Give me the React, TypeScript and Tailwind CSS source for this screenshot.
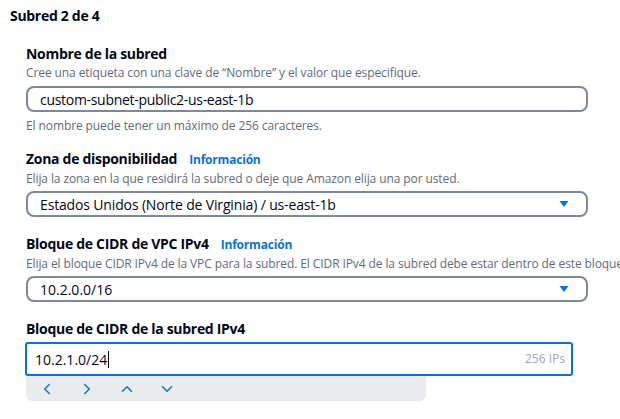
import { ChevronLeft, ChevronRight, ChevronUp, ChevronDown } from "lucide-react";

function Caret() {
  return (
    <svg className="w-3 h-3" viewBox="0 0 16 16">
      <path d="M2 4h12L8 12z" fill="#0972d3" />
    </svg>
  );
}

function Label({ text, info }: { text: string; info?: boolean }) {
  return (
    <div className="flex items-baseline gap-3 text-[14px] leading-[20px]">
      <span className="font-bold text-[#000716] tracking-[-0.3px]">{text}</span>
      {info && <span className="text-[12px] font-bold text-[#0972d3] tracking-[-0.2px]">Información</span>}
    </div>
  );
}

function Desc({ text }: { text: string }) {
  return <p className="text-[12px] leading-[18px] text-[#5f6b7a] whitespace-nowrap tracking-[-0.1px]">{text}</p>;
}

export default function App() {
  return (
    <div className="w-[620px] h-[419px] overflow-hidden bg-white text-[#000716] font-['Open_Sans',sans-serif]">
      <div className="pt-[7px] pl-[10px] text-[14px] font-bold leading-[18px] tracking-[-0.3px]">Subred 2 de 4</div>

      <div className="pl-[26px] pr-[32px] mt-[19px] flex flex-col">
        <Label text="Nombre de la subred" />
        <Desc text="Cree una etiqueta con una clave de “Nombre” y el valor que especifique." />
        <div className="mt-[4px] h-[26px] border-2 border-[#7d8998] rounded-lg flex items-center px-3 text-[14px] tracking-[-0.3px]">
          custom-subnet-public2-us-east-1b
        </div>
        <div className="mt-[5px]">
          <Desc text="El nombre puede tener un máximo de 256 caracteres." />
        </div>

        <div className="mt-[14px]">
          <Label text="Zona de disponibilidad" info />
        </div>
        <Desc text="Elija la zona en la que residirá la subred o deje que Amazon elija una por usted." />
        <div className="mt-[3px] h-[26px] border-2 border-[#7d8998] rounded-lg flex items-center justify-between pl-3 pr-4 text-[14px] tracking-[-0.15px]">
          <span>Estados Unidos (Norte de Virginia) / us-east-1b</span>
          <Caret />
        </div>

        <div className="mt-[17px]">
          <Label text="Bloque de CIDR de VPC IPv4" info />
        </div>
        <Desc text="Elija el bloque CIDR IPv4 de la VPC para la subred. El CIDR IPv4 de la subred debe estar dentro de este bloque." />
        <div className="mt-[3px] h-[26px] border-2 border-[#7d8998] rounded-lg flex items-center justify-between pl-3 pr-4 text-[14px]">
          <span>10.2.0.0/16</span>
          <Caret />
        </div>

        <div className="mt-[17px]">
          <Label text="Bloque de CIDR de la subred IPv4" />
        </div>
        <div className="-ml-px mr-[15px] mt-[3px] h-[34px] border-2 border-[#0972d3] rounded-[3px] flex items-center justify-between pl-[8px] pr-[6px] text-[14px]">
          <span className="flex items-center">
            10.2.1.0/24<span className="w-px h-[17px] bg-[#000716] ml-px" />
          </span>
          <span className="text-[12px] text-[#9ba7b6]">256 IPs</span>
        </div>
        <div className="w-[400px] h-[25px] bg-[#e9ebed] rounded-b-md flex items-center gap-[22px] pl-[12px] text-[#0972d3]">
          <ChevronLeft size={18} strokeWidth={2} />
          <ChevronRight size={18} strokeWidth={2} />
          <ChevronUp size={18} strokeWidth={2} />
          <ChevronDown size={18} strokeWidth={2} />
        </div>
      </div>
    </div>
  );
}
